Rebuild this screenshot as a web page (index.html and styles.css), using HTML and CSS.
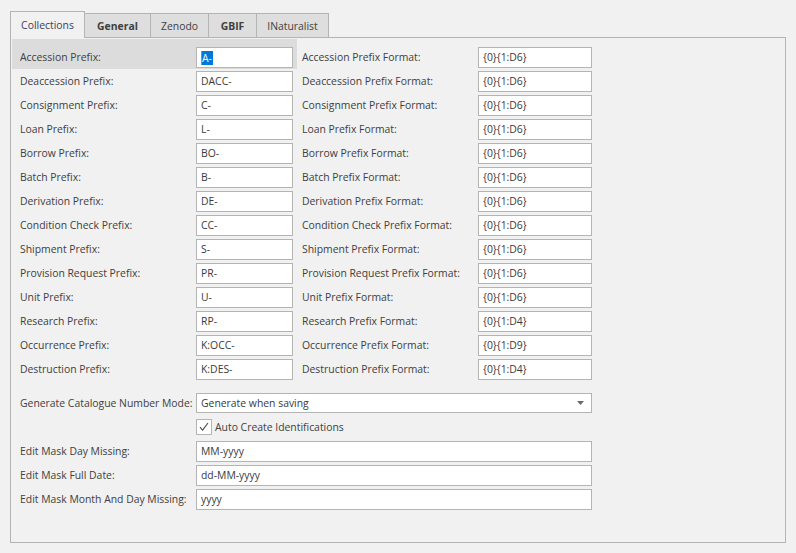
FILE: index.html
```html
<!DOCTYPE html>
<html>
<head>
<meta charset="utf-8">
<link rel="stylesheet" href="styles.css">
</head>
<body>
<div class="tabs">
  <div class="tab active t-col">Collections</div>
  <div class="tab bold t-gen">General</div>
  <div class="tab t-zen">Zenodo</div>
  <div class="tab bold t-gbif">GBIF</div>
  <div class="tab t-inat">INaturalist</div>
</div>
<div class="panel">
  <div class="row">
    <div class="item hl first"><span class="lbl">Accession Prefix:</span><div class="box w1"><span class="caret"></span><span class="sel">A-</span></div></div>
    <div class="item2 first"><span class="lbl">Accession Prefix Format:</span><div class="box w2">{0}{1:D6}</div></div>
  </div>
  <div class="row">
    <div class="item"><span class="lbl">Deaccession Prefix:</span><div class="box w1">DACC-</div></div>
    <div class="item2"><span class="lbl">Deaccession Prefix Format:</span><div class="box w2">{0}{1:D6}</div></div>
  </div>
  <div class="row">
    <div class="item"><span class="lbl">Consignment Prefix:</span><div class="box w1">C-</div></div>
    <div class="item2"><span class="lbl">Consignment Prefix Format:</span><div class="box w2">{0}{1:D6}</div></div>
  </div>
  <div class="row">
    <div class="item"><span class="lbl">Loan Prefix:</span><div class="box w1">L-</div></div>
    <div class="item2"><span class="lbl">Loan Prefix Format:</span><div class="box w2">{0}{1:D6}</div></div>
  </div>
  <div class="row">
    <div class="item"><span class="lbl">Borrow Prefix:</span><div class="box w1">BO-</div></div>
    <div class="item2"><span class="lbl">Borrow Prefix Format:</span><div class="box w2">{0}{1:D6}</div></div>
  </div>
  <div class="row">
    <div class="item"><span class="lbl">Batch Prefix:</span><div class="box w1">B-</div></div>
    <div class="item2"><span class="lbl">Batch Prefix Format:</span><div class="box w2">{0}{1:D6}</div></div>
  </div>
  <div class="row">
    <div class="item"><span class="lbl">Derivation Prefix:</span><div class="box w1">DE-</div></div>
    <div class="item2"><span class="lbl">Derivation Prefix Format:</span><div class="box w2">{0}{1:D6}</div></div>
  </div>
  <div class="row">
    <div class="item"><span class="lbl">Condition Check Prefix:</span><div class="box w1">CC-</div></div>
    <div class="item2"><span class="lbl">Condition Check Prefix Format:</span><div class="box w2">{0}{1:D6}</div></div>
  </div>
  <div class="row">
    <div class="item"><span class="lbl">Shipment Prefix:</span><div class="box w1">S-</div></div>
    <div class="item2"><span class="lbl">Shipment Prefix Format:</span><div class="box w2">{0}{1:D6}</div></div>
  </div>
  <div class="row">
    <div class="item"><span class="lbl">Provision Request Prefix:</span><div class="box w1">PR-</div></div>
    <div class="item2"><span class="lbl">Provision Request Prefix Format:</span><div class="box w2">{0}{1:D6}</div></div>
  </div>
  <div class="row">
    <div class="item"><span class="lbl">Unit Prefix:</span><div class="box w1">U-</div></div>
    <div class="item2"><span class="lbl">Unit Prefix Format:</span><div class="box w2">{0}{1:D6}</div></div>
  </div>
  <div class="row">
    <div class="item"><span class="lbl">Research Prefix:</span><div class="box w1">RP-</div></div>
    <div class="item2"><span class="lbl">Research Prefix Format:</span><div class="box w2">{0}{1:D4}</div></div>
  </div>
  <div class="row">
    <div class="item"><span class="lbl">Occurrence Prefix:</span><div class="box w1">K:OCC-</div></div>
    <div class="item2"><span class="lbl">Occurrence Prefix Format:</span><div class="box w2">{0}{1:D9}</div></div>
  </div>
  <div class="row">
    <div class="item"><span class="lbl">Destruction Prefix:</span><div class="box w1">K:DES-</div></div>
    <div class="item2"><span class="lbl">Destruction Prefix Format:</span><div class="box w2">{0}{1:D4}</div></div>
  </div>

  <div class="wide combo-row">
    <span class="lbl">Generate Catalogue Number Mode:</span>
    <div class="box w3 combo"><span>Generate when saving</span>
      <svg class="arrow" width="7" height="4" viewBox="0 0 7 4"><path d="M0 0H7L3.5 4Z" fill="#6a6a6a"/></svg>
    </div>
  </div>
  <div class="wide check-row">
    <div class="check"><svg width="14" height="14" viewBox="0 0 14 14"><path d="M3 7.2L5.6 10.2L11 3" fill="none" stroke="#4a4a4a" stroke-width="1.1"/></svg></div>
    <span class="check-text">Auto Create Identifications</span>
  </div>
  <div class="wide">
    <span class="lbl">Edit Mask Day Missing:</span>
    <div class="box w3">MM-yyyy</div>
  </div>
  <div class="wide">
    <span class="lbl">Edit Mask Full Date:</span>
    <div class="box w3">dd-MM-yyyy</div>
  </div>
  <div class="wide">
    <span class="lbl">Edit Mask Month And Day Missing:</span>
    <div class="box w3">yyyy</div>
  </div>
</div>
</body>
</html>
```
FILE: styles.css
```css
html, body {
  margin: 0;
  padding: 0;
  background: #f1f1f1;
}
body {
  width: 796px;
  height: 553px;
  overflow: hidden;
  font-family: "Open Sans", "Noto Sans", "Liberation Sans", sans-serif;
  font-size: 10.4px;
  color: #404040;
}
.tabs {
  display: flex;
  align-items: flex-end;
  padding: 11px 0 0 10px;
  height: 38px;
  box-sizing: border-box;
  margin-bottom: -1px;
}
.tab {
  box-sizing: border-box;
  height: 25px;
  border: 1px solid #b4b4b4;
  background: #dedede;
  display: flex;
  align-items: center;
  justify-content: center;
  margin-left: -1px;
  color: #404040;
}
.tab.active {
  height: 27px;
  background: #f1f1f1;
  border-bottom: none;
  margin-left: 0;
  z-index: 2;
  color: #3d3d5c;
  padding-bottom: 1px;
}
.tab.bold { font-weight: bold; }
.t-col { width: 75px; }
.t-gen { width: 67px; }
.t-zen { width: 59px; }
.t-gbif { width: 49px; }
.t-inat { width: 73px; }

.panel {
  margin: 0 10px 10px 10px;
  height: 506px;
  box-sizing: border-box;
  border: 1px solid #b4b4b4;
  padding: 1px;
}
.row {
  display: flex;
}
.item {
  display: flex;
  align-items: flex-start;
  width: 285px;
  height: 24px;
  padding: 0 0 0 8px;
  box-sizing: border-box;
}
.item.first, .item2.first {
  height: 30px;
  padding-top: 6px;
}
.hl { background: #dcdcdc; }
.item2 {
  display: flex;
  align-items: flex-start;
  height: 24px;
  margin-left: 5px;
  box-sizing: border-box;
}
.lbl {
  display: block;
  width: 176px;
  flex: none;
  line-height: 21px;
  margin-top: 2px;
  white-space: nowrap;
}
.box {
  flex: none;
  box-sizing: border-box;
  height: 21px;
  margin-top: 2px;
  border: 1px solid #b4b4b4;
  background: #fff;
  padding-left: 4px;
  line-height: 19px;
  color: #3a3a3a;
  white-space: nowrap;
  display: flex;
  align-items: center;
}
.w1 { width: 97px; }
.w2 { width: 114px; }
.w3 { width: 396px; }
.sel {
  background: #0078d7;
  color: #fff;
  line-height: 14px;
  padding-right: 1px;
}
.caret {
  display: inline-block;
  width: 1px;
  height: 14px;
  background: #e07a1f;
}
.wide {
  display: flex;
  align-items: flex-start;
  height: 24px;
  padding-left: 8px;
}
.combo-row {
  margin-top: 10px;
}
.combo {
  justify-content: space-between;
  padding-right: 7px;
  height: 20px;
}
.arrow { display: block; }
.check {
  margin: 4px 0 0 176px;
  width: 16px;
  height: 16px;
  box-sizing: border-box;
  border: 1px solid #b4b4b4;
  background: #fff;
  display: flex;
  align-items: center;
  justify-content: center;
}
.check svg { display: block; }
.check-text {
  margin-left: 3px;
  line-height: 16px;
  margin-top: 4px;
}
```
